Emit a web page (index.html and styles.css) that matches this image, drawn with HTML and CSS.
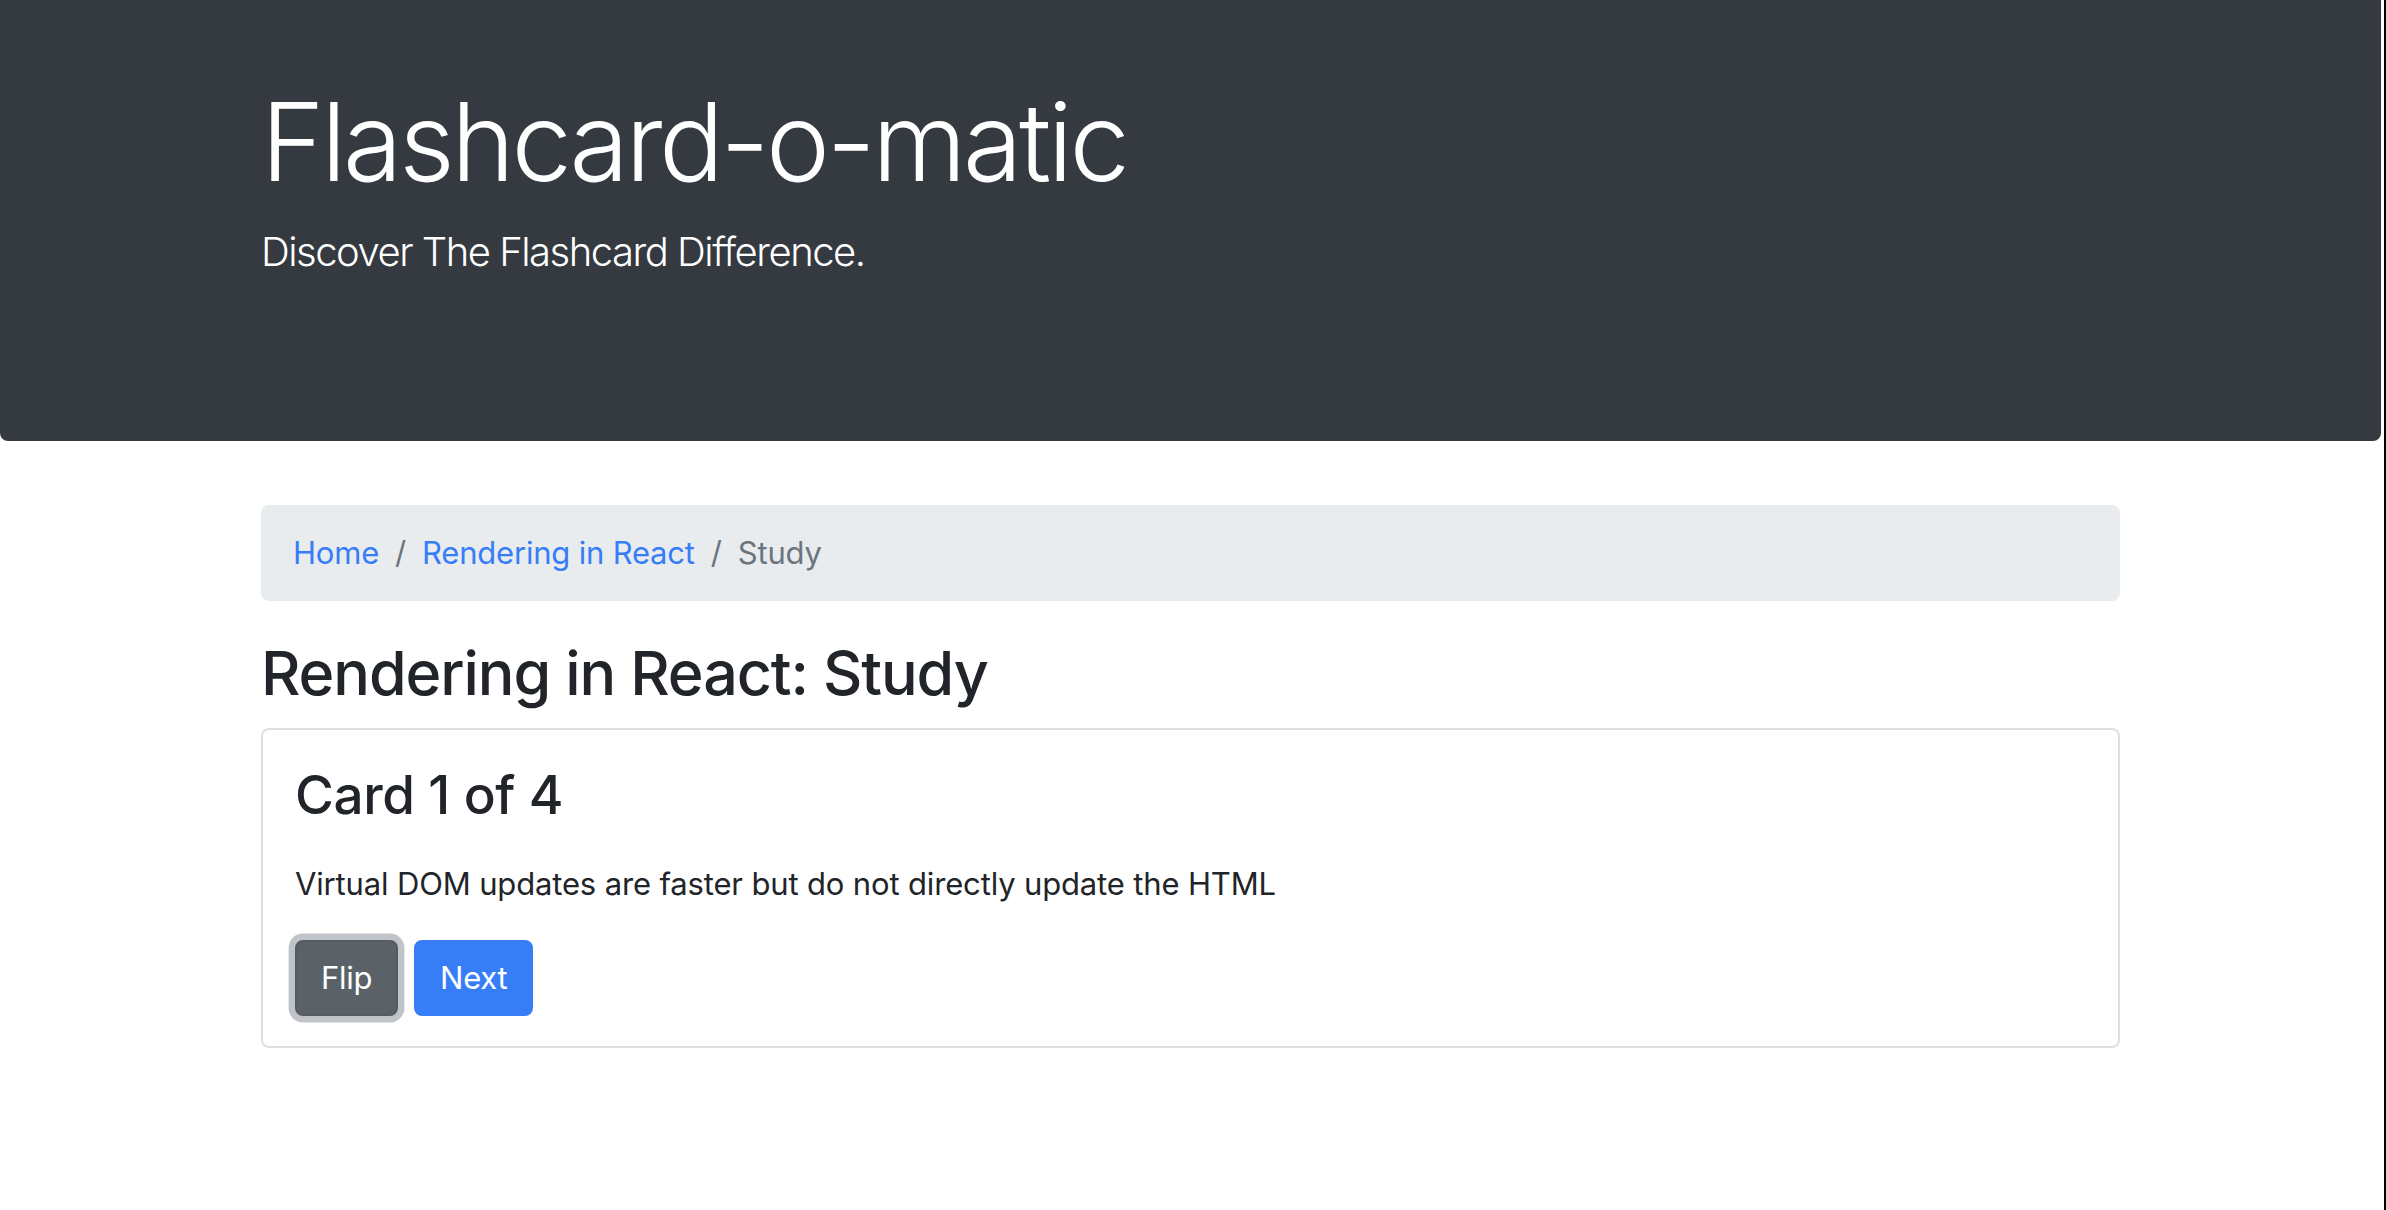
FILE: index.html
```html
<!DOCTYPE html>
<html lang="en">
<head>
<meta charset="utf-8">
<title>Flashcard-o-matic</title>
<link rel="stylesheet" href="styles.css">
</head>
<body>
<div class="page">
  <header class="jumbotron">
    <div class="container">
      <h1 class="display">Flashcard-o-matic</h1>
      <p class="lead">Discover The Flashcard Difference.</p>
    </div>
  </header>
  <main class="container">
    <nav class="breadcrumb">
      <a class="crumb-link" href="#">Home</a>
      <span class="sep">/</span>
      <a class="crumb-link" href="#">Rendering in React</a>
      <span class="sep">/</span>
      <span class="crumb-active">Study</span>
    </nav>
    <h2 class="page-title">Rendering in React: Study</h2>
    <section class="card">
      <div class="card-body">
        <h3 class="card-title">Card 1 of 4</h3>
        <p class="card-text">Virtual DOM updates are faster but do not directly update the HTML</p>
        <div class="actions">
          <button class="btn btn-secondary is-focused" type="button">Flip</button>
          <button class="btn btn-primary" type="button">Next</button>
        </div>
      </div>
    </section>
  </main>
</div>
<div class="edge"></div>
</body>
</html>
```

FILE: styles.css
```css
* { box-sizing: border-box; }

html, body {
  margin: 0;
  padding: 0;
  background: #ffffff;
}

body {
  display: flex;
  min-height: 1210px;
  font-family: Inter, "Noto Sans", "Liberation Sans", sans-serif;
  color: #212529;
  font-size: 31px;
  line-height: 48px;
}

.page {
  width: 2381px;
  flex: none;
}

.edge {
  width: 2px;
  margin-left: 3px;
  background: #000000;
}

.container {
  width: 1859px;
  margin: 0 auto;
}

.jumbotron {
  background: #343a40;
  color: #ffffff;
  border-radius: 0 0 8px 8px;
  padding: 75px 0 127px;
  margin-bottom: 64px;
}

.display {
  margin: 0 0 13px;
  font-size: 108px;
  line-height: 134px;
  font-weight: 300;
  letter-spacing: -3.4px;
}

.lead {
  margin: 0 0 32px;
  font-size: 40px;
  line-height: 60px;
  font-weight: 300;
  letter-spacing: -1.5px;
}

.breadcrumb {
  display: flex;
  align-items: center;
  background: #e9ecef;
  border-radius: 8px;
  padding: 24px 32px;
  margin-bottom: 34px;
  font-size: 31px;
  line-height: 48px;
  letter-spacing: -0.2px;
}

.crumb-link {
  color: #377df6;
  text-decoration: none;
}

.sep {
  color: #6c757d;
  padding: 0 16px;
}

.crumb-active {
  color: #6c757d;
}

.page-title {
  margin: 0 0 16px;
  font-size: 61px;
  line-height: 77px;
  font-weight: 500;
  letter-spacing: -1.1px;
}

.card {
  border: 2px solid #dfdfdf;
  border-radius: 8px;
  background: #ffffff;
}

.card-body {
  padding: 32px 32px 30px;
}

.card-title {
  margin: 0 0 31px;
  font-size: 53px;
  line-height: 67px;
  font-weight: 500;
  letter-spacing: -0.4px;
}

.card-text {
  margin: 0 0 32px;
  font-size: 31px;
  line-height: 48px;
  letter-spacing: -0.15px;
}

.actions {
  display: flex;
  gap: 16px;
}

.btn {
  font-family: inherit;
  font-size: 31px;
  line-height: 48px;
  letter-spacing: -0.3px;
  padding: 12px 24px;
  border: 2px solid transparent;
  border-radius: 8px;
  color: #ffffff;
  cursor: pointer;
}

.btn-secondary {
  background: #5a6268;
  border-color: #545b62;
}

.btn-secondary.is-focused {
  box-shadow: 0 0 0 6.4px rgba(130, 138, 145, 0.5);
}

.btn-primary {
  background: #377df6;
  border-color: #377df6;
}
```
